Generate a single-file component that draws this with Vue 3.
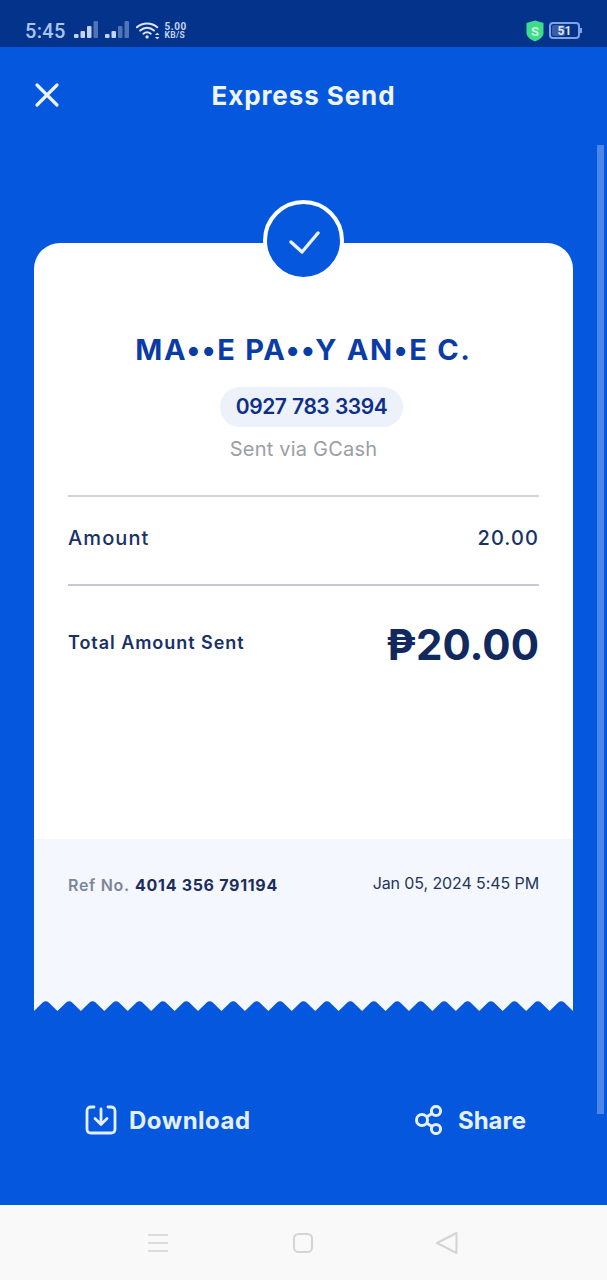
<template>
  <div class="screen">
    <div class="status">
      <span class="clock">5:45</span>
      <svg class="signal" width="24" height="18" viewBox="0 0 24 18">
        <rect x="0" y="13" width="4.500" height="4" rx="1" fill="#c3d5f3" />
        <rect x="6.500" y="10" width="4.500" height="7" rx="1" fill="#c3d5f3" />
        <rect x="13" y="5" width="4.500" height="12" rx="1" fill="#c3d5f3" />
        <rect x="19.500" y="0" width="4.500" height="17" rx="1" fill="#4f74b8" />
      </svg>
      <svg class="signal second" width="24" height="18" viewBox="0 0 24 18">
        <rect x="0" y="13" width="4.500" height="4" rx="1" fill="#c3d5f3" />
        <rect x="6.500" y="10" width="4.500" height="7" rx="1" fill="#c3d5f3" />
        <rect x="13" y="5" width="4.500" height="12" rx="1" fill="#4f74b8" />
        <rect x="19.500" y="0" width="4.500" height="17" rx="1" fill="#4f74b8" />
      </svg>
      <svg class="wifi" width="24" height="19" viewBox="0 0 26 20" fill="none" stroke="#dbe6f8" stroke-width="2.200" stroke-linecap="round">
        <path d="M1 6.500C7 1 17 1 23 6.500" />
        <path d="M4.500 10C9 6 15 6 19.500 10" />
        <path d="M8 13.500C10.500 11.500 13.500 11.500 16 13.500" />
        <circle cx="12" cy="17" r="1.800" fill="#dbe6f8" stroke="none" />
        <path d="M20.500 15l2.500-2.500 2.500 2.500zM20.500 17l2.500 2.500 2.500-2.500z" fill="#dbe6f8" stroke="none" />
      </svg>
      <span class="speed"><b>5.00</b><b>KB/S</b></span>
      <svg class="shield" width="18" height="22" viewBox="0 0 18 22">
        <path d="M9 0.500L17.500 3V13C17.500 17 13 20 9 21.500C5 20 0.500 17 0.500 13V3Z" fill="#3fdc8c" />
        <text x="9" y="15.500" text-anchor="middle" class="shield-mark">S</text>
      </svg>
      <div class="battery"><span class="level"></span><span class="pct">51</span></div>
      <span class="nub"></span>
    </div>

    <header class="top">
      <svg class="close" width="26" height="26" viewBox="0 0 26 26" fill="none" stroke="#eaf3ff" stroke-width="3.200" stroke-linecap="round">
        <path d="M3 3L23 23M23 3L3 23" />
      </svg>
      <h1>Express Send</h1>
    </header>

    <main class="body">
      <section class="receipt">
        <div class="check">
          <svg width="32" height="26" viewBox="0 0 32 26" fill="none" stroke="#e8f1ff" stroke-width="3.400" stroke-linecap="round" stroke-linejoin="round">
            <path d="M3 14L14 24L30 5" />
          </svg>
        </div>
        <div class="receipt-main">
          <div class="name">MA••E PA••Y AN•E C.</div>
          <div class="phone">0927 783 3394</div>
          <div class="via">Sent via GCash</div>
          <div class="row amount">
            <span>Amount</span>
            <span>20.00</span>
          </div>
          <div class="row total">
            <span class="total-label">Total Amount Sent</span>
            <span class="total-value">₱20.00</span>
          </div>
        </div>
        <div class="receipt-foot">
          <span class="ref"><i>Ref No.</i> <b>4014 356 791194</b></span>
          <span class="date">Jan 05, 2024 5:45 PM</span>
        </div>
        <svg class="teeth" width="539" height="11" viewBox="0 0 539 11">
          <path :d="teethPath" fill="#f4f7fd" />
        </svg>
      </section>

      <div class="actions">
        <button class="action">
          <svg width="32" height="30" viewBox="0 0 32 30" fill="none" stroke="#e4f0ff" stroke-width="2.800" stroke-linecap="round" stroke-linejoin="round">
            <path d="M9 2H6C3.500 2 2 3.500 2 6V24C2 26.500 3.500 28 6 28H26C28.500 28 30 26.500 30 24V6C30 3.500 28.500 2 26 2H23" />
            <path d="M16 4V19M10 13.500L16 19.500L22 13.500" />
          </svg>
          <span>Download</span>
        </button>
        <button class="action share">
          <svg width="28" height="30" viewBox="0 0 28 30" fill="none" stroke="#e4f0ff" stroke-width="3">
            <circle cx="7" cy="15" r="5.500" />
            <circle cx="21" cy="6" r="4.600" />
            <circle cx="21" cy="24" r="4.600" />
            <path d="M11.500 12L17 8.500M11.500 18L17 21.500" />
          </svg>
          <span>Share</span>
        </button>
      </div>
      <div class="scrollbar"></div>
    </main>

    <nav class="nav">
      <svg width="22" height="20" viewBox="0 0 22 20" stroke="#dcdcdc" stroke-width="2">
        <path d="M1 2H21M1 10H21M1 18H21" />
      </svg>
      <svg class="home" width="22" height="22" viewBox="0 0 22 22" fill="none" stroke="#d4d4d4" stroke-width="2">
        <rect x="2" y="2" width="18" height="18" rx="4.500" />
      </svg>
      <svg class="back" width="24" height="24" viewBox="0 0 24 24" fill="none" stroke="#d4d4d4" stroke-width="2" stroke-linejoin="round">
        <path d="M21.500 2V22L2 12Z" />
      </svg>
    </nav>
  </div>
</template>

<script setup>
// receipt's torn edge: 23 teeth with softened notches
const toothCount = 23;
const toothWidth = 539 / toothCount;

let d = "M0 0L0 11";
for (let i = 0; i < toothCount; i++) {
  const x = i * toothWidth;
  const mid = x + toothWidth / 2;
  d += `L${(mid - 3).toFixed(2)} 2.6Q${mid.toFixed(2)} 0 ${(mid + 3).toFixed(2)} 2.6L${(x + toothWidth).toFixed(2)} 11`;
}
const teethPath = d + "L539 0Z";
</script>

<style>
html, body { margin: 0; background: #0557dd; }
</style>

<style scoped>
.screen {
  width: 607px;
  height: 1280px;
  display: flex;
  flex-direction: column;
  overflow: hidden;
  background: #0557dd;
  font-family: Inter, "Liberation Sans", sans-serif;
}

/* status bar */
.status {
  height: 47px;
  flex: none;
  display: flex;
  align-items: center;
  padding: 14px 26px 0;
  box-sizing: border-box;
  background: #04338c;
}
.clock {
  margin-left: -1px;
  font: 500 20px Roboto, sans-serif;
  color: #a9c4ef;
  letter-spacing: 0.3px;
}
.signal { margin: 0 0 1px 8px; }
.signal.second { margin-left: 7px; }
.wifi { margin-left: 7px; }
.speed {
  display: flex;
  flex-direction: column;
  margin-left: 5px;
  font-family: Roboto, sans-serif;
  color: #c3d5f3;
}
.speed b { display: block; height: 9px; line-height: 9px; font-weight: 700; }
.speed b:first-child { font-size: 10px; letter-spacing: 0.5px; }
.speed b:last-child { font-size: 8.500px; letter-spacing: 0.3px; }
.shield { margin-left: auto; }
.shield-mark { font: 700 13px Roboto, sans-serif; fill: #c8f7dd; }
.battery {
  position: relative;
  width: 31px;
  height: 17px;
  margin-left: 5px;
  border: 2px solid #7fa3e6;
  border-radius: 4px;
  box-sizing: border-box;
  display: flex;
  align-items: center;
  justify-content: center;
}
.level {
  position: absolute;
  left: 1px;
  top: 1px;
  bottom: 1px;
  width: 13px;
  border-radius: 2px;
  background: #3b5ea6;
}
.pct {
  position: relative;
  font: 700 12px Roboto, sans-serif;
  color: #dbe6f8;
}
.nub {
  width: 2px;
  height: 5px;
  margin-right: -1px;
  background: #7fa3e6;
}

/* title row */
.top {
  position: relative;
  height: 96px;
  flex: none;
  display: flex;
  align-items: center;
  justify-content: center;
}
.top h1 {
  margin: 0;
  font-size: 26px;
  font-weight: 700;
  letter-spacing: 0.9px;
  color: #eef5ff;
}
.close {
  position: absolute;
  left: 34px;
  top: 35px;
}

.body {
  position: relative;
  flex: 1;
  padding: 100px 34px 0;
}

/* receipt card */
.receipt { position: relative; }
.check {
  position: absolute;
  left: 229px;
  top: -43px;
  width: 73px;
  height: 73px;
  border: 4px solid #fff;
  border-radius: 50%;
  background: #0557dd;
  display: flex;
  align-items: center;
  justify-content: center;
}
.receipt-main {
  height: 596px;
  box-sizing: border-box;
  padding: 89px 34px 0;
  background: #fff;
  border-radius: 26px 26px 0 0;
  display: flex;
  flex-direction: column;
  align-items: stretch;
}
.name {
  text-align: center;
  font-size: 29px;
  line-height: 36px;
  font-weight: 700;
  color: #0b3ca6;
  letter-spacing: 1.700px;
}
.phone {
  align-self: center;
  width: 183px;
  height: 40px;
  margin: 19px 0 0 16px;
  border-radius: 20px;
  background: #edf1fa;
  text-align: center;
  font-size: 21px;
  line-height: 40px;
  font-weight: 600;
  letter-spacing: -0.500px;
  word-spacing: 1px;
  color: #0e2f85;
}
.via {
  margin-top: 8px;
  text-align: center;
  font-size: 20px;
  line-height: 28px;
  letter-spacing: 0.2px;
  color: #9a9ea6;
}
.row {
  display: flex;
  justify-content: space-between;
  align-items: center;
  color: #183166;
}
.amount {
  height: 91px;
  margin-top: 32px;
  padding-bottom: 5px;
  border-top: 2px solid #d0d2dc;
  border-bottom: 2px solid #c5c8dc;
  box-sizing: border-box;
  font-size: 20px;
  font-weight: 500;
  letter-spacing: 1.100px;
}
.total {
  height: 118px;
  letter-spacing: 0;
}
.total-label {
  margin-top: -5px;
  font-size: 18px;
  font-weight: 600;
  letter-spacing: 0.950px;
}
.total-value {
  margin-top: -1px;
  font-size: 42px;
  font-weight: 700;
  color: #12295f;
}
.receipt-foot {
  height: 161px;
  box-sizing: border-box;
  padding: 34px 34px 0;
  background: #f4f7fd;
  display: flex;
  justify-content: space-between;
  align-items: flex-start;
  font-size: 16px;
  line-height: 24px;
}
.ref { letter-spacing: 0.7px; }
.ref i {
  font-style: normal;
  font-weight: 600;
  color: #7c8699;
}
.ref b {
  font-weight: 700;
  color: #1c2d5c;
}
.date {
  margin-top: -2px;
  letter-spacing: -0.1px;
  color: #23355f;
}
.teeth { display: block; }

/* download / share */
.actions {
  display: flex;
  justify-content: space-between;
  margin-top: 94px;
  padding: 0 47px 0 51px;
}
.action {
  display: flex;
  align-items: center;
  gap: 12px;
  padding: 0;
  border: none;
  background: none;
  font: 700 24px Inter, sans-serif;
  letter-spacing: 0.5px;
  color: #e4f0ff;
}
.action.share {
  gap: 15px;
  letter-spacing: 0;
}

.scrollbar {
  position: absolute;
  right: 3px;
  top: 2px;
  width: 7px;
  height: 969px;
  background: #4d86ea;
}

/* android nav bar */
.nav {
  height: 75px;
  flex: none;
  box-sizing: border-box;
  padding-left: 147px;
  background: #f9f9f9;
  display: flex;
  align-items: center;
}
.home { margin-left: 123px; }
.back { margin-left: 121px; }
</style>
